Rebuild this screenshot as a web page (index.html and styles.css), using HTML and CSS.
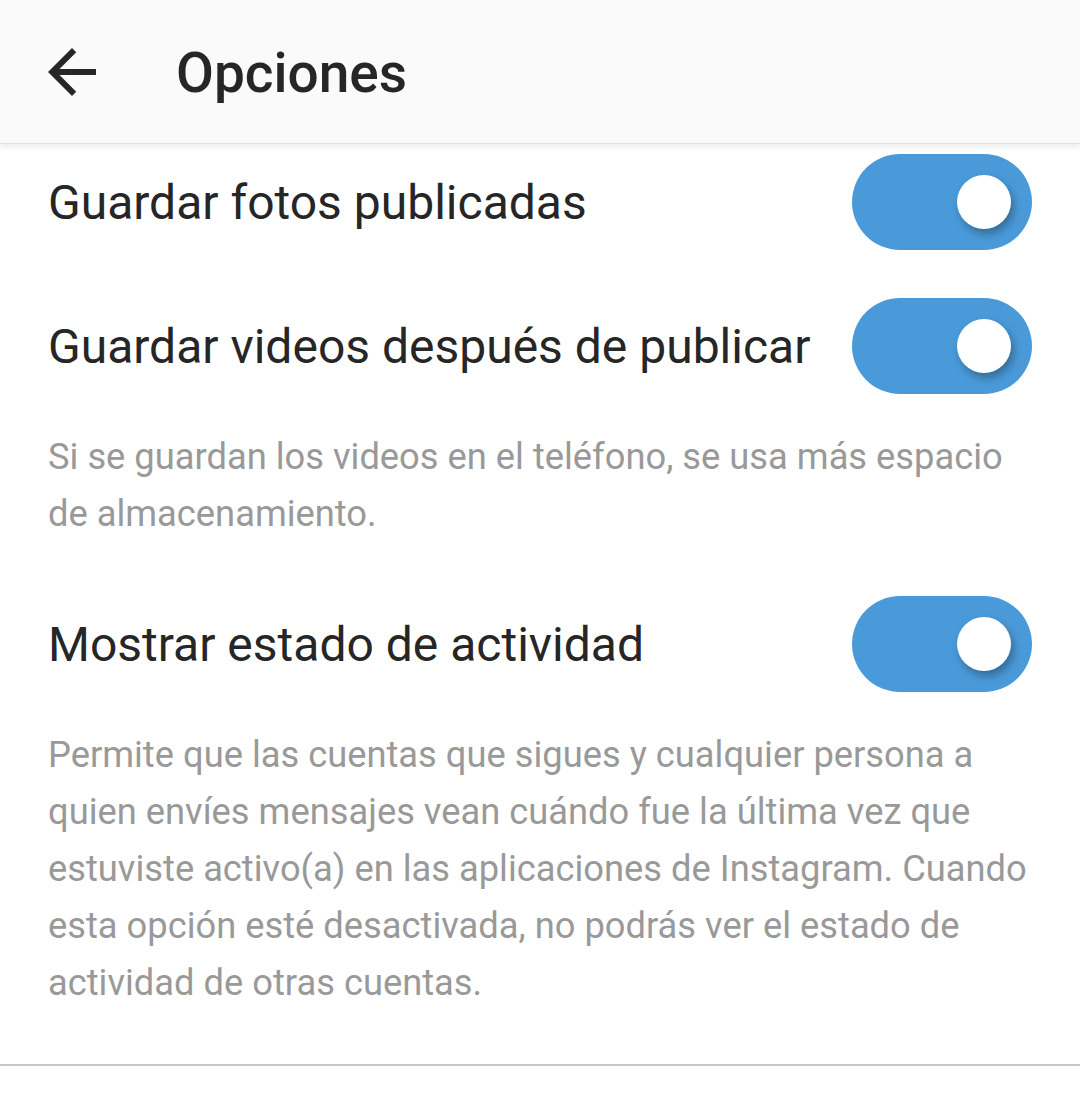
FILE: index.html
```html
<!DOCTYPE html>
<html lang="es">
<head>
    <meta charset="UTF-8">
    <meta name="viewport" content="width=device-width, initial-scale=1.0">
    <title>Opciones</title>
    <link rel="stylesheet" href="styles.css">
</head>
<body>

<!-- Barra superior -->
<header class="barra">
    <svg class="volver" viewBox="0 0 24 24" width="72" height="72">
        <path d="M20 11H7.83l5.59-5.59L12 4l-8 8 8 8 1.41-1.41L7.83 13H20v-2z" fill="#262626"/>
    </svg>
    <h1 class="titulo">Opciones</h1>
</header>

<!-- Lista de opciones -->
<main class="opciones">
    <div class="fila">
        <span class="etiqueta">Guardar fotos publicadas</span>
        <div class="interruptor activo"><span class="perilla"></span></div>
    </div>
    <div class="fila">
        <span class="etiqueta">Guardar videos después de publicar</span>
        <div class="interruptor activo"><span class="perilla"></span></div>
    </div>
    <p class="descripcion">Si se guardan los videos en el teléfono, se usa más espacio de almacenamiento.</p>

    <div class="fila">
        <span class="etiqueta">Mostrar estado de actividad</span>
        <div class="interruptor activo"><span class="perilla"></span></div>
    </div>
    <p class="descripcion">Permite que las cuentas que sigues y cualquier persona a quien envíes mensajes vean cuándo fue la última vez que estuviste activo(a) en las aplicaciones de Instagram. Cuando esta opción esté desactivada, no podrás ver el estado de actividad de otras cuentas.</p>

    <hr class="separador">
</main>

</body>
</html>
```

FILE: styles.css
```css
/* Base */
body {
    margin: 0;
    background-color: #fff;
    font-family: Roboto, "Noto Sans", sans-serif;
    color: #262626;
}

/* Barra superior */
.barra {
    position: relative;
    z-index: 2;
    height: 143px;
    display: flex;
    align-items: center;
    background-color: #fafafa;
    border-bottom: 1px solid #e2e2e2;
    box-shadow: 0 3px 6px rgba(0, 0, 0, 0.08);
}
.volver {
    margin-left: 36px;
    flex-shrink: 0;
}
.titulo {
    margin: 2px 0 0 68px;
    font-size: 55px;
    font-weight: 500;
    color: #262626;
}

/* Lista de opciones */
.opciones {
    margin-top: -14px;
}
.fila {
    height: 144px;
    display: flex;
    align-items: center;
    justify-content: space-between;
    padding: 0 48px;
}
.etiqueta {
    font-size: 48px;
    color: #262626;
}
.descripcion {
    margin: 0;
    padding: 10px 48px 30px;
    font-size: 36.3px;
    line-height: 57px;
    color: #999;
}

/* Interruptor */
.interruptor {
    position: relative;
    width: 180px;
    height: 96px;
    border-radius: 48px;
    background-color: #ccc;
    flex-shrink: 0;
}
.interruptor.activo {
    background-color: #4a9ad9;
}
.perilla {
    position: absolute;
    top: 21px;
    left: 21px;
    width: 54px;
    height: 54px;
    border-radius: 50%;
    background-color: #fff;
    box-shadow: 3px 5px 8px rgba(0, 0, 0, 0.3);
}
.interruptor.activo .perilla {
    left: auto;
    right: 21px;
}

.separador {
    margin: 23px 0 0;
    border: none;
    border-top: 2px solid #c8c8c8;
}
```
